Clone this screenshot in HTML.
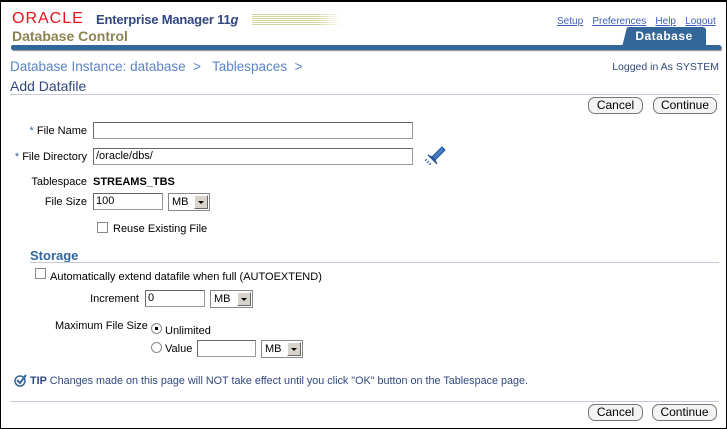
<!DOCTYPE html>
<html><head><meta charset="utf-8"><style>
*{margin:0;padding:0;box-sizing:border-box}
body{width:727px;height:429px;overflow:hidden;background:#fff;font-family:"Liberation Sans",Arial,sans-serif;font-size:11px;color:#000;position:relative}
.frame{position:absolute;left:0;top:0;width:727px;height:429px;border:1px solid #000;border-top-width:2px}
.a{position:absolute;white-space:nowrap}
.in{position:absolute;height:17px;border:1px solid #999;border-top-color:#666;border-left-color:#666;background:#fff;font-size:11px;padding:1px 2px;line-height:13px}
.sel{position:absolute;height:18px;border:1px solid #888;background:#fff;font-size:11px;padding:1px 3px;line-height:14px}
.sel b{position:absolute;right:1px;top:1px;width:14px;height:14px;background:#d8d4cc;border:1px solid #fff;border-right-color:#666;border-bottom-color:#666}
.sel b:after{content:"";position:absolute;left:3px;top:5px;border-left:3px solid transparent;border-right:3px solid transparent;border-top:3px solid #000}
.btn{position:absolute;height:17px;border:1px solid #777;border-radius:7px;background:#f4f4f4;font-size:12px;text-align:center;line-height:15px}
.lbl{position:absolute;text-align:right;white-space:nowrap}
.cb{position:absolute;width:11px;height:11px;border:1px solid #888;background:#fff}
.rd{position:absolute;width:11px;height:11px;border:1px solid #888;border-radius:50%;background:#fff}
.ln{position:absolute;height:1px;background:#c8c8d8}
.lk{color:#3f5fb8;text-decoration:underline;font-size:10px}
.star{color:#336699}
</style></head><body>
<div class="frame"></div>
<div class="a" style="left:12px;top:10px;font-size:16px;color:#e8121a;letter-spacing:1px">ORACLE</div>
<div class="a" style="left:96px;top:12px;font-size:13px;font-weight:bold;color:#31487e;letter-spacing:-0.2px">Enterprise Manager 11<i>g</i></div>
<div class="a" style="left:252px;top:14px;width:90px;height:12px;background:repeating-linear-gradient(#d6d49e 0 1px,#fff 1px 2px);-webkit-mask:linear-gradient(90deg,#000 70%,transparent);"></div>
<div class="a" style="left:12px;top:28px;font-size:14px;font-weight:bold;color:#8a8452">Database Control</div>
<div class="a" style="left:557px;top:15px"><span class="lk">Setup</span>&nbsp;&nbsp;&nbsp;<span class="lk">Preferences</span>&nbsp;&nbsp;&nbsp;<span class="lk">Help</span>&nbsp;&nbsp;&nbsp;<span class="lk">Logout</span></div>
<div class="a" style="left:622px;top:27px;width:84px;height:20px;background:#336699;border-radius:8px 3px 0 0;clip-path:polygon(6% 0,100% 0,100% 100%,0 100%);color:#fff;font-weight:bold;font-size:12px;text-align:center;line-height:19px;letter-spacing:0.5px">Database</div>
<div class="a" style="left:11px;top:45px;width:710px;height:5px;background:#336699;border-radius:2px;box-shadow:1px 1px 1px #888"></div>
<div class="a" style="left:10px;top:59px;font-size:13.5px;color:#5b84c4">Database Instance: database &nbsp;&gt;&nbsp;&nbsp; Tablespaces &nbsp;&gt;</div>
<div class="a" style="right:8px;top:61px;font-size:10.5px;color:#31487e">Logged in As SYSTEM</div>
<div class="a" style="left:10px;top:78px;font-size:14px;color:#31487e">Add Datafile</div>
<div class="ln" style="left:10px;top:94px;width:709px"></div>
<div class="btn" style="left:588px;top:97px;width:55px">Cancel</div>
<div class="btn" style="left:653px;top:97px;width:64px">Continue</div>

<div class="lbl" style="right:640px;top:125px"><span class="star">*</span> File Name</div>
<div class="in" style="left:93px;top:122px;width:320px"></div>
<div class="lbl" style="right:640px;top:151px"><span class="star">*</span> File Directory</div>
<div class="in" style="left:93px;top:148px;width:320px">/oracle/dbs/</div>
<svg class="a" style="left:420px;top:144px" width="28" height="28" viewBox="0 0 28 28"><path d="M12 13 L22 3 L25 6 L15 16 Z" fill="#4a7cc4" stroke="#1f4f99"/><path d="M8 11 L17 20 L15 16 L12 13 Z" fill="#3a6ab4" stroke="#1f4f99"/><path d="M5 17 l2 -2 M7 19 l2 -2 M9 21 l2 -2" stroke="#3a6ab4" stroke-width="1.2"/></svg>
<div class="lbl" style="right:640px;top:176px">Tablespace</div>
<div class="a" style="left:93px;top:176px;font-weight:bold">STREAMS_TBS</div>
<div class="lbl" style="right:640px;top:196px">File Size</div>
<div class="in" style="left:93px;top:193px;width:70px">100</div>
<div class="sel" style="left:168px;top:193px;width:42px">MB<b></b></div>
<div class="cb" style="left:97px;top:222px"></div>
<div class="a" style="left:113px;top:223px">Reuse Existing File</div>

<div class="a" style="left:30px;top:248px;font-size:13px;font-weight:bold;color:#336699">Storage</div>
<div class="ln" style="left:30px;top:262px;width:689px"></div>
<div class="cb" style="left:35px;top:268px"></div>
<div class="a" style="left:50px;top:271px">Automatically extend datafile when full (AUTOEXTEND)</div>
<div class="lbl" style="right:588px;top:293px">Increment</div>
<div class="in" style="left:145px;top:290px;width:60px">0</div>
<div class="sel" style="left:210px;top:290px;width:43px">MB<b></b></div>
<div class="a" style="left:55px;top:320px">Maximum File Size</div>
<div class="rd" style="left:151px;top:323px"><div style="position:absolute;left:3px;top:3px;width:3px;height:3px;background:#000"></div></div>
<div class="a" style="left:165px;top:325px">Unlimited</div>
<div class="rd" style="left:151px;top:342px"></div>
<div class="a" style="left:165px;top:343px">Value</div>
<div class="in" style="left:197px;top:340px;width:59px"></div>
<div class="sel" style="left:261px;top:340px;width:42px">MB<b></b></div>

<svg class="a" style="left:14px;top:373px" width="14" height="14" viewBox="0 0 14 14"><circle cx="6" cy="8" r="5" fill="none" stroke="#336699" stroke-width="1.5"/><path d="M3 7 L6 10 L12 2" fill="none" stroke="#336699" stroke-width="2"/></svg>
<div class="a" style="left:30px;top:375px;color:#31487e;font-size:10.8px"><b>TIP</b> Changes made on this page will NOT take effect until you click "OK" button on the Tablespace page.</div>
<div class="ln" style="left:10px;top:401px;width:709px"></div>
<div class="btn" style="left:588px;top:404px;width:55px">Cancel</div>
<div class="btn" style="left:652px;top:404px;width:65px">Continue</div>
</body></html>
